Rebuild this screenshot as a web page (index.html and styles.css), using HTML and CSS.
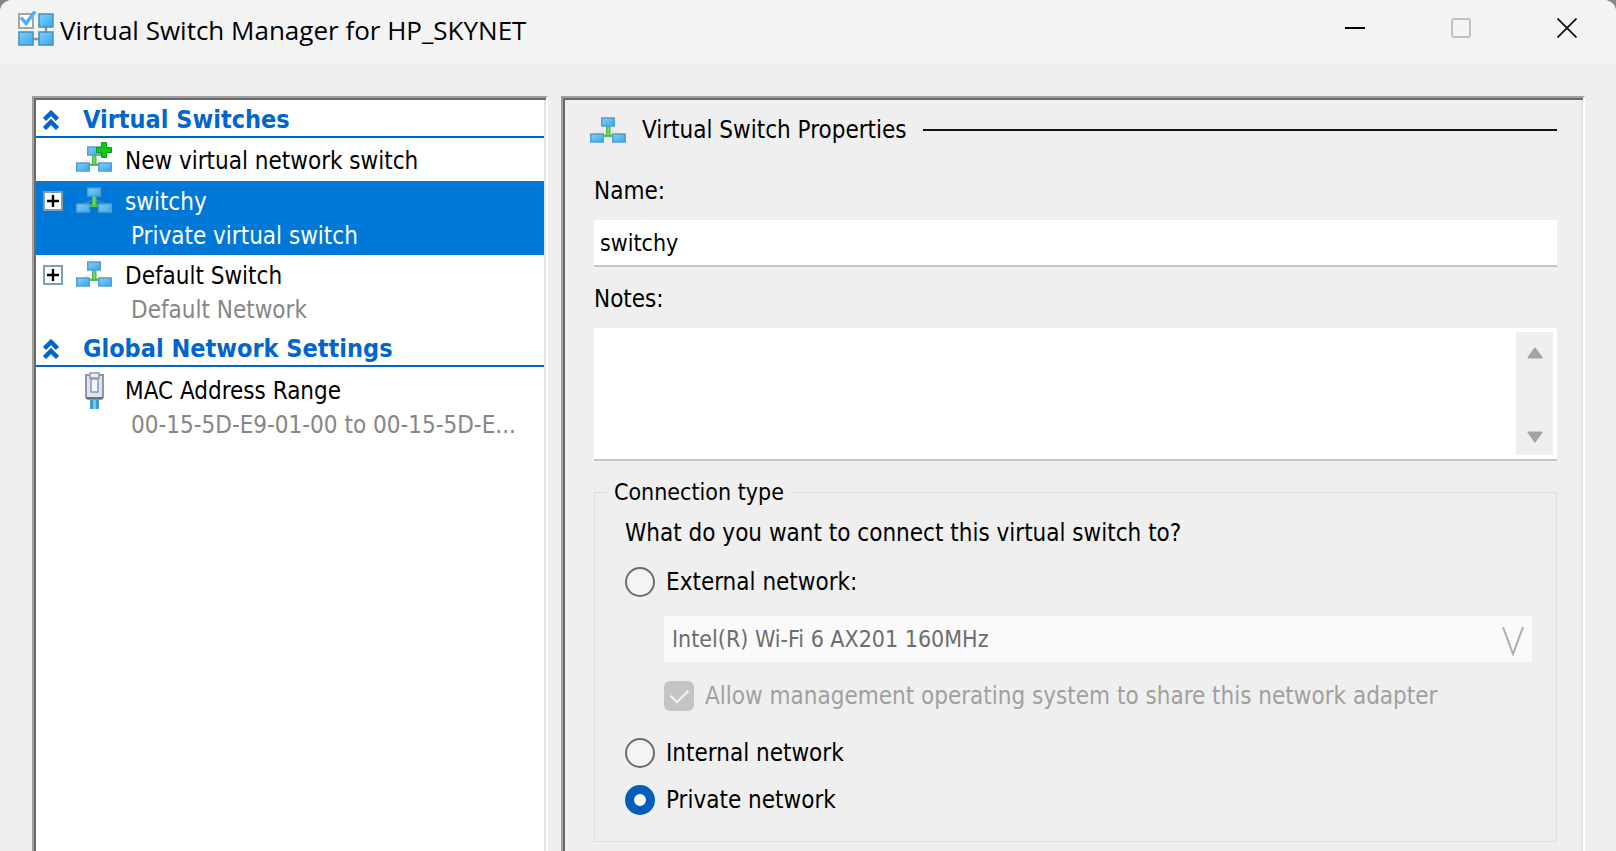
FILE: index.html
```html
<!DOCTYPE html>
<html lang="en">
<head>
<meta charset="utf-8">
<title>Virtual Switch Manager for HP_SKYNET</title>
<link rel="stylesheet" href="styles.css">
</head>
<body>
<svg class="defs" aria-hidden="true">
  <defs>
    <linearGradient id="screen" x1="0" y1="0" x2="1" y2="1">
      <stop offset="0" stop-color="#7fd0fb"/><stop offset="1" stop-color="#35a9ee"/>
    </linearGradient>
    <symbol id="switch" viewBox="0 0 36 26">
      <path d="M8 15.500 15 14h6l7 1.500" fill="none" stroke="#b8b8b8" stroke-width="1.500" opacity=".25"/>
      <path d="M16 9h4.500v8l3 1.500v1.500h-10.500v-1.500l3-1.500z" fill="#4fc04f"/>
      <path d="M17.500 10h1.500v8h-1.500z" fill="#76d96c"/>
      <g fill="url(#screen)" stroke="#5a9cc8" stroke-width="1.500">
        <rect x="11.750" y="1" width="12.500" height="8"/>
        <rect x=".75" y="17" width="12.500" height="8"/>
        <rect x="22.750" y="17" width="12.500" height="8"/>
      </g>
    </symbol>
    <symbol id="chevrons" viewBox="0 0 16 20">
      <path d="M1.500 9.500 8 3l6.500 6.500M1.500 18.500 8 12l6.500 6.500" fill="none" stroke="#0066cc" stroke-width="4.500"/>
    </symbol>
    <symbol id="plusbox" viewBox="0 0 20 20">
      <rect x="1" y="1" width="18" height="18" fill="#fff" stroke="#7f9db9" stroke-width="2"/>
      <path d="M4 10h12M10 4v12" stroke="#000" stroke-width="2.400"/>
    </symbol>
  </defs>
</svg>
<div class="window">
  <header class="titlebar">
    <svg class="app-icon" viewBox="0 0 36 35" aria-hidden="true">
      <path d="M28 14v9M14 28h8" stroke="#8c9499" stroke-width="2.500"/>
      <rect x="1" y="3" width="14" height="14" fill="#fdfdfd" stroke="#a5a5a5" stroke-width="2"/>
      <g fill="url(#screen)" stroke="#4a93bf" stroke-width="1.600">
        <rect x="21" y="3" width="14" height="13"/>
        <rect x="1" y="21" width="14" height="13"/>
        <rect x="21" y="21" width="14" height="13"/>
      </g>
      <path d="M3 6.500 8 12.500 17 .5" fill="none" stroke="#55acf0" stroke-width="3.500"/>
    </svg>
    <h1 class="title">Virtual Switch Manager for HP_SKYNET</h1>
    <div class="controls">
      <button class="control" type="button" aria-label="Minimize"><svg viewBox="0 0 20 20"><path d="M0 10h20" stroke="#000" stroke-width="2"/></svg></button>
      <button class="control" type="button" aria-label="Maximize" disabled><svg viewBox="0 0 20 20"><rect x="1" y="1" width="18" height="18" rx="2" fill="none" stroke="#c2c2c2" stroke-width="2"/></svg></button>
      <button class="control" type="button" aria-label="Close"><svg viewBox="0 0 20 20"><path d="m.5.5 19 19M19.500.5l-19 19" stroke="#111" stroke-width="1.800"/></svg></button>
    </div>
  </header>
  <main class="content">
    <nav class="panel tree" aria-label="Settings">
      <h2 class="group"><svg class="chevrons"><use href="#chevrons"/></svg>Virtual Switches</h2>
      <div class="node node-single">
        <span></span>
        <svg class="node-icon node-icon-new" viewBox="0 0 36 30">
          <use href="#switch" y="4" width="36" height="26"/>
          <path d="M25.500.5h5v5h5v5h-5v5h-5v-5h-5v-5h5z" fill="#10c810" stroke="#0a9a1c"/>
        </svg>
        <span class="node-name">New virtual network switch</span>
      </div>
      <div class="node node-selected">
        <svg class="plusbox"><use href="#plusbox"/></svg>
        <svg class="node-icon"><use href="#switch"/></svg>
        <span class="node-name">switchy</span>
        <span class="node-detail">Private virtual switch</span>
      </div>
      <div class="node">
        <svg class="plusbox"><use href="#plusbox"/></svg>
        <svg class="node-icon"><use href="#switch"/></svg>
        <span class="node-name">Default Switch</span>
        <span class="node-detail">Default Network</span>
      </div>
      <h2 class="group"><svg class="chevrons"><use href="#chevrons"/></svg>Global Network Settings</h2>
      <div class="node node-range">
        <span></span>
        <svg class="node-icon node-icon-plug" viewBox="0 0 36 38">
          <path d="M14 26h9v11h-9z" fill="#3b9cc9"/><path d="M17 26h3v11h-3z" fill="#7cc6e4"/>
          <path d="M10 3h17v22l-2 2H12l-2-2z" fill="#dfe3ec" stroke="#8d97b0" stroke-width="2"/>
          <path d="M14 1h9v5h-9z" fill="#eef0f5" stroke="#8d97b0" stroke-width="1.500"/>
          <path d="M15 7h7v13h-7z" fill="#f5f6f9" stroke="#8d97b0" stroke-width="1.500"/>
          <path d="M10 26h17" stroke="#64708f" stroke-width="2"/>
        </svg>
        <span class="node-name">MAC Address Range</span>
        <span class="node-detail">00-15-5D-E9-01-00 to 00-15-5D-E...</span>
      </div>
    </nav>
    <section class="panel props">
      <h2 class="props-head"><svg class="switch-icon"><use href="#switch"/></svg>Virtual Switch Properties</h2>
      <label class="label" for="name">Name:</label>
      <input class="textbox" id="name" type="text" value="switchy">
      <label class="label" for="notes">Notes:</label>
      <div class="notes">
        <textarea class="notes-text" id="notes"></textarea>
        <div class="scrollbar">
          <button class="scroll-button" type="button" aria-label="Scroll up" disabled><svg viewBox="0 0 16 12"><path d="M8 1.500 14.500 10.500h-13z" fill="#a3a3a3" stroke="#a3a3a3" stroke-width="2" stroke-linejoin="round"/></svg></button>
          <button class="scroll-button scroll-down" type="button" aria-label="Scroll down" disabled><svg viewBox="0 0 16 12"><path d="M8 10.500 14.500 1.500h-13z" fill="#a3a3a3" stroke="#a3a3a3" stroke-width="2" stroke-linejoin="round"/></svg></button>
        </div>
      </div>
      <fieldset class="connection">
        <legend class="legend">Connection type</legend>
        <p class="question">What do you want to connect this virtual switch to?</p>
        <label class="choice"><input class="radio" type="radio" name="connection">External network:</label>
        <div class="adapter">
          <select class="select" aria-label="Network adapter" disabled><option>Intel(R) Wi-Fi 6 AX201 160MHz</option></select>
          <svg class="select-arrow" viewBox="0 0 22 30"><path d="M1 1 11 28 21 1" fill="none" stroke="#adadad" stroke-width="2"/></svg>
        </div>
        <label class="choice choice-share"><input class="checkbox" type="checkbox" checked disabled>Allow management operating system to share this network adapter</label>
        <label class="choice"><input class="radio" type="radio" name="connection">Internal network</label>
        <label class="choice"><input class="radio" type="radio" name="connection" checked>Private network</label>
      </fieldset>
    </section>
  </main>
</div>
</body>
</html>
```
FILE: styles.css
```css
* { box-sizing: border-box; }

body {
  margin: 0;
  background: #8d8580;
  color: #000;
  font: 24px/34px "DejaVu Sans Condensed", "DejaVu Sans", sans-serif;
}

h1, h2, p { margin: 0; font: inherit; }
svg { display: block; flex: none; }
input, textarea, select, button { font: inherit; color: inherit; margin: 0; }
.defs { position: absolute; width: 0; height: 0; }

.window {
  display: flex;
  flex-direction: column;
  min-height: 100vh;
  background: #efefef;
  border-radius: 12px 12px 0 0;
  overflow: hidden;
}

.titlebar {
  display: flex;
  align-items: center;
  height: 64px;
  padding: 0 0 8px 18px;
  background: #f3f3f3;
}
.app-icon { width: 36px; height: 35px; }
.title {
  flex: 1;
  padding: 4px 0 0 6px;
  font: 26px/36px "Open Sans", sans-serif;
}
.controls { display: flex; }
.control {
  display: grid;
  place-items: center;
  width: 98px;
  height: 56px;
  padding: 0;
  border: 0;
  background: none;
}
.control + .control { margin-left: 8px; }
.control svg { width: 20px; height: 20px; }

.content {
  flex: 1;
  display: grid;
  grid-template-columns: 516px 1fr;
  gap: 13px;
  padding: 32px 31px 0 32px;
}
.panel {
  border: solid;
  border-width: 2px 2px 0;
  border-color: #a0a0a0 #fff #fff #a0a0a0;
  box-shadow: inset 2px 2px #696969, inset -2px 0 #e3e3e3;
}

.tree { padding: 2px; background: #fff; }
.group {
  display: flex;
  align-items: center;
  gap: 24px;
  height: 38px;
  padding: 4px 0 0 7px;
  border-bottom: 2px solid #0066cc;
  color: #0066cc;
  font-weight: bold;
  font-size: 25px;
}
.chevrons { width: 16px; height: 20px; }
.node {
  display: grid;
  grid-template-columns: 20px 36px 1fr;
  grid-template-rows: 34px 34px;
  column-gap: 13px;
  padding: 4px 0 2px 7px;
  align-items: center;
}
.node-single { grid-template-rows: 38px; padding-bottom: 1px; }
.node-range { margin-top: 3px; }
.node-selected { background: #0078d7; color: #fff; }
.plusbox { width: 20px; height: 20px; margin-bottom: 2px; }
.node-icon { width: 36px; height: 26px; margin-bottom: 4px; }
.switch-icon { width: 36px; height: 26px; }
.node-icon-new { height: 30px; margin-bottom: 8px; }
.node-icon-plug { height: 38px; margin-bottom: 0; }
.node-detail {
  grid-column: 3;
  padding-left: 6px;
  color: #868686;
  white-space: nowrap;
}
.node-selected .node-detail { color: #fff; }

.props { padding: 12px 26px 9px 31px; }
.props-head {
  display: flex;
  align-items: center;
  gap: 16px;
  height: 40px;
  margin-left: -4px;
}
.props-head::after {
  content: "";
  flex: 1;
  height: 2px;
  background: #111;
}
.label { display: block; padding: 24px 0 12px; }
.textbox, .notes-text { display: block; border: 0; outline: 0; }
.textbox {
  width: 100%;
  height: 47px;
  padding: 0 6px;
  border-bottom: 2px solid #c4c4c4;
  background: #fff;
  font-size: 23px;
}
.textbox + .label { padding: 15px 0 12px; }
.notes {
  display: flex;
  height: 133px;
  padding: 4px;
  border-bottom: 2px solid #c4c4c4;
  background: #fff;
}
.notes-text { flex: 1; padding: 0; resize: none; background: #fff; }
.scrollbar {
  display: flex;
  flex-direction: column;
  justify-content: space-between;
  width: 37px;
  background: #efefef;
}
.scroll-button {
  display: grid;
  place-items: center;
  height: 42px;
  padding: 0;
  border: 0;
  background: none;
}
.scroll-down { height: 36px; }
.scroll-button svg { width: 16px; height: 12px; }

.connection {
  margin: 14px 0 0;
  padding: 7px 24px 18px 30px;
  border: 1px solid #dedede;
  min-width: 0;
}
.legend { margin-left: -17px; padding: 0 6px; font-size: 23px; }
.question { padding-bottom: 8px; }
.choice { display: flex; align-items: center; gap: 11px; height: 47px; }
.choice-share { height: 67px; margin-left: 39px; color: #a0a0a0; }
.radio, .checkbox {
  appearance: none;
  flex: none;
  display: grid;
  place-items: center;
  width: 30px;
  height: 30px;
}
.radio { border: 2px solid #6c6c6c; border-radius: 50%; background: #f4f4f4; }
.radio:checked { border: 9px solid #005fb8; background: #fff; }
.checkbox { border-radius: 6px; background: #c4c4c4; }
.checkbox::before {
  content: "";
  width: 15px;
  height: 8px;
  margin-bottom: 4px;
  border: solid #f6f6f6;
  border-width: 0 0 2px 2px;
  transform: rotate(-45deg);
}
.adapter { position: relative; margin: 11px 0 0 39px; }
.select {
  appearance: none;
  display: block;
  width: 100%;
  height: 46px;
  padding: 0 40px 0 8px;
  border: 0;
  background: #fafafa;
  color: #6d6d6d;
  font-size: 23px;
  opacity: 1;
}
.select-arrow {
  position: absolute;
  right: 8px;
  top: 10px;
  width: 22px;
  height: 30px;
  pointer-events: none;
}
```
